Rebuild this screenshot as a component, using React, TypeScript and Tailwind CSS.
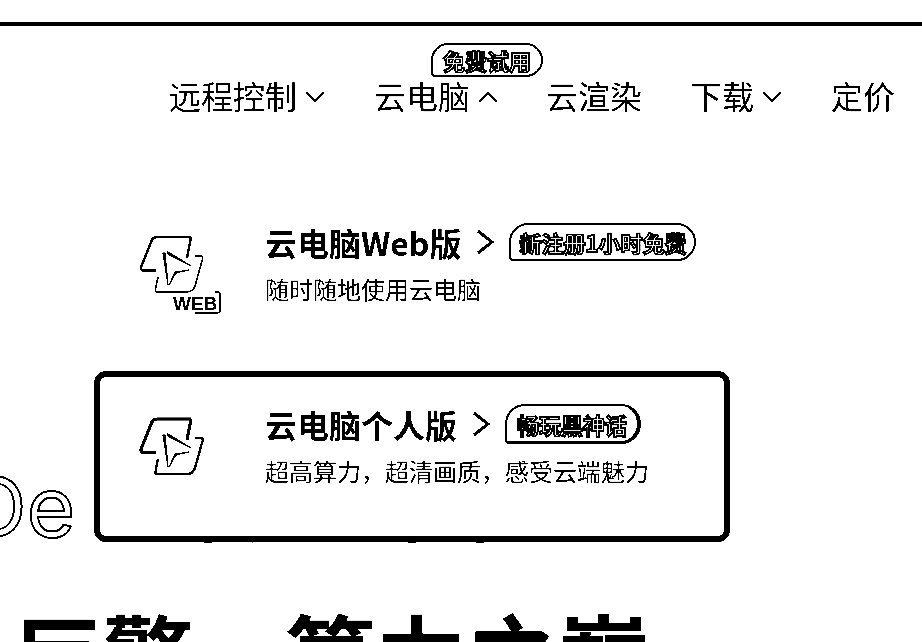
import React from 'react';

const cjk = 'font-["Noto_Sans_CJK_SC","Noto_Sans",sans-serif]';

function Chevron({ up }: { up?: boolean }) {
  return (
    <svg width="20" height="12" viewBox="0 0 20 12" fill="none" stroke="black" strokeWidth="2" className="ml-2 mt-1">
      <polyline points={up ? '1,11 10,2 19,11' : '1,1 10,10 19,1'} />
    </svg>
  );
}

function Badge({ text, className }: { text: string; className?: string }) {
  return (
    <span
      className={`flex h-[38px] items-center justify-center rounded-[20px] rounded-bl-[4px] border-2 border-black bg-white px-[8px] text-[22px] font-bold leading-none text-white [-webkit-text-stroke:1.8px_black] ${className ?? ''}`}
    >
      {text}
    </span>
  );
}

function ProductIcon({ web }: { web?: boolean }) {
  return (
    <svg width="96" height="96" viewBox="0 0 96 96" fill="none" stroke="black" className="shrink-0">
      <path
        d="M62 14H28C25 14 23.500 15 22.500 18L12 44C11.500 46.500 12.500 47.500 15 47.500H27M62 14L58 35"
        strokeWidth={web ? 2.4 : 3.2}
        strokeLinejoin="round"
      />
      <path
        d="M66 33H72C73.500 33 74 34 73.500 36L66 63C64.500 67 62 69 58 69H28.500C26.500 69 26 68 26.500 66L29 54"
        strokeWidth={web ? 1.6 : 2.4}
      />
      <path d="M39 29L62 43L39 31Z" strokeWidth="1.400" fill="black" />
      <path d="M34 30L39 62L36 30Z" strokeWidth="1.200" fill="black" />
      <path d="M40 62L47 50L60 47L46 49Z" strokeWidth="1" fill="black" />
      {web && (
        <>
          <text x="44" y="87" fill="black" stroke="none" fontSize="19" fontWeight="700" fontFamily="Liberation Sans, sans-serif">
            WEB
          </text>
          <path d="M86 69H89C90.500 69 91 70 91 71V87C91 89 90 90 88 90H66" strokeWidth="1.500" />
        </>
      )}
    </svg>
  );
}

function Arrow() {
  return (
    <svg width="18" height="24" viewBox="0 0 18 24" fill="none" stroke="black" strokeWidth="3" className="ml-[15px]">
      <polyline points="2,1 16,12 2,23" />
    </svg>
  );
}

function ProductRow({
  title,
  sub,
  badge,
  badgeClass,
  web,
  active,
}: {
  title: string;
  sub: string;
  badge: string;
  badgeClass?: string;
  web?: boolean;
  active?: boolean;
}) {
  return (
    <div
      className={`flex h-[171px] gap-[40px] rounded-[12px] border-[6px] pl-[29px] pt-[25px] ${
        active ? 'border-black bg-white' : 'border-transparent bg-white'
      }`}
    >
      <div className="pt-[3px]">
        <ProductIcon web={web} />
      </div>
      <div>
        <div className="flex h-[44px] items-center">
          <span className="text-[32px] font-bold leading-[44px] text-black">{title}</span>
          <Arrow />
          <Badge text={badge} className={`ml-[15px] ${badgeClass ?? ''}`} />
        </div>
        <p className="mt-2 text-[24px] leading-[34px] text-black">{sub}</p>
      </div>
    </div>
  );
}

export default function App() {
  return (
    <div className={`relative h-[642px] w-[922px] overflow-hidden bg-white contrast-[40] ${cjk}`}>
      <div className="h-[22px]" />
      <div className="h-[4px] bg-black" />

      <nav className="flex h-[143px] items-start pl-[169px] pt-[47px] text-[32px] leading-[44px] text-black">
        <div className="flex w-[205px] items-center">
          远程控制
          <Chevron />
        </div>
        <div className="relative flex w-[172px] items-center">
          云电脑
          <Chevron up />
          <Badge text="免费试用" className="absolute left-[57px] top-[-30px] !h-[34px] w-[112px] !px-0" />
        </div>
        <div className="w-[144px]">云渲染</div>
        <div className="flex w-[141px] items-center">
          下载
          <Chevron />
        </div>
        <div>定价</div>
      </nav>

      {/* hero behind the open menu */}
      <div className="mt-[290px] flex h-[96px] items-start">
        <span className="ml-[-34px] text-[84px] leading-[96px] text-white [-webkit-text-stroke:2px_black] font-['Inter',sans-serif]">
          De
        </span>
        <span className="ml-[100px] mt-[1px] text-[68px] font-bold leading-[96px] text-black">下人盒下下</span>
      </div>
      <h1 className="ml-[12px] mt-[32px] whitespace-nowrap text-[91px] font-bold leading-[130px] text-black">
        巨擎，算力之巅
      </h1>

      {/* menu */}
      <div className="absolute left-[94px] top-[189px] flex w-[636px] flex-col gap-[11px]">
        <ProductRow web title="云电脑Web版" sub="随时随地使用云电脑" badge="新注册1小时免费" />
        <ProductRow
          active
          title="云电脑个人版"
          sub="超高算力，超清画质，感受云端魅力"
          badge="畅玩黑神话"
          badgeClass="h-[40px] !px-[10px] border-r-[4px] border-b-[3px]"
        />
      </div>
    </div>
  );
}
